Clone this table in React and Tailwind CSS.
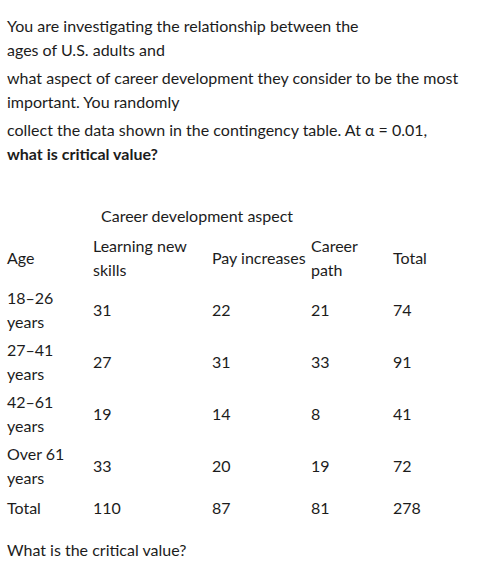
import React from "react";

const rows = [
  { age: ["18–26", "years"], vals: ["31", "22", "21", "74"] },
  { age: ["27–41", "years"], vals: ["27", "31", "33", "91"] },
  { age: ["42–61", "years"], vals: ["19", "14", "8", "41"] },
  { age: ["Over 61", "years"], vals: ["33", "20", "19", "72"] },
];

function Cell({ children, className = "" }) {
  return <td className={`px-[2px] py-[2px] align-middle ${className}`}>{children}</td>;
}

export default function App() {
  return (
    <div
      className="bg-white text-[#1c1c1c] text-[16px] leading-[24px] px-[7px] pt-[14px] pb-4"
      style={{ fontFamily: "Lato, 'Open Sans', sans-serif" }}
    >
      <p>
        You are investigating the relationship between the
        <br />
        ages of U.S. adults and
      </p>
      <p className="mt-1">
        what aspect of career development they consider to be the most
        <br />
        important. You randomly
      </p>
      <p className="mt-1">
        collect the data shown in the contingency table. At α = 0.01,
        <br />
        <b className="font-bold">what is critical value?</b>
      </p>

      <table className="mt-[38px] -ml-[2px] table-fixed border-collapse">
        <colgroup>
          <col className="w-[86px]" />
          <col className="w-[119px]" />
          <col className="w-[99px]" />
          <col className="w-[82px]" />
          <col className="w-[80px]" />
        </colgroup>
        <tbody>
          <tr>
            <td />
            <td colSpan={3} className="pl-[10px] pt-0 pb-[4px]">
              Career development aspect
            </td>
            <td />
          </tr>
          <tr>
            <Cell>Age</Cell>
            <Cell>
              Learning new
              <br />
              skills
            </Cell>
            <Cell className="whitespace-nowrap">Pay increases</Cell>
            <Cell>
              Career
              <br />
              path
            </Cell>
            <Cell>Total</Cell>
          </tr>
          {rows.map((r) => (
            <tr key={r.age[0]}>
              <Cell>
                {r.age[0]}
                <br />
                {r.age[1]}
              </Cell>
              {r.vals.map((v, i) => (
                <Cell key={i}>{v}</Cell>
              ))}
            </tr>
          ))}
          <tr>
            <Cell className="pt-[4px]">Total</Cell>
            <Cell className="pt-[4px]">110</Cell>
            <Cell className="pt-[4px]">87</Cell>
            <Cell className="pt-[4px]">81</Cell>
            <Cell className="pt-[4px]">278</Cell>
          </tr>
        </tbody>
      </table>

      <p className="mt-[16px]">What is the critical value?</p>
    </div>
  );
}
